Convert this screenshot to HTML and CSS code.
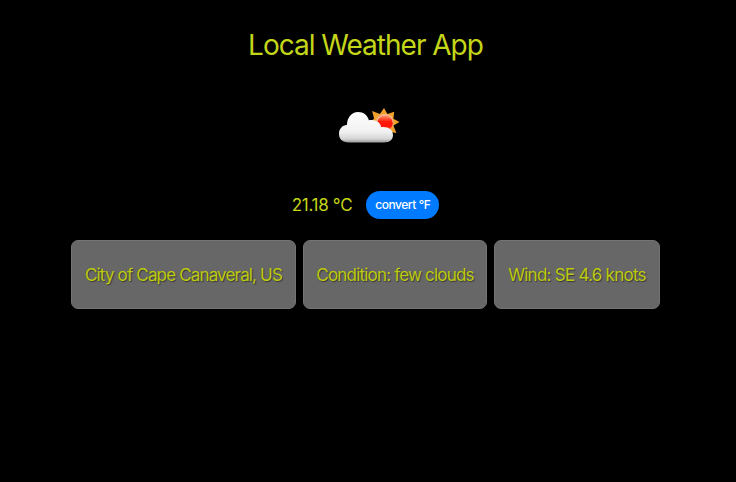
FILE: index.html
```html
<!DOCTYPE html>
<html lang="en">
<head>
<meta charset="utf-8">
<title>Local Weather App</title>
<link rel="stylesheet" href="styles.css">
</head>
<body>
<main class="app">
  <h1 class="title"><span>Local Weather App</span></h1>
  <svg class="icon" width="72" height="48" viewBox="0 0 72 48" aria-hidden="true">
    <defs>
      <linearGradient id="sun" x1="0" y1="0" x2="0" y2="1"><stop offset="0" stop-color="#ff9a70"/><stop offset=".4" stop-color="#ff1a08"/><stop offset=".7" stop-color="#ff1408"/><stop offset="1" stop-color="#ff8a20"/></linearGradient>
      <linearGradient id="cloud" x1="0" y1="0" x2="0" y2="1"><stop offset="0" stop-color="#fff"/><stop offset=".65" stop-color="#f1f1f1"/><stop offset=".88" stop-color="#d5d5d5"/><stop offset="1" stop-color="#999"/></linearGradient>
    </defs>
    <path fill="#f0a12b" d="M50 7l3.400 6 6.800-2.200-.8 7 6.100 3.300-6.100 3.300 3 7.700-8.400-1.500-4 5-4.500-5-6.400 1 1-6.500-4-3.500 4-4-2-7.600 7.800 3z"/>
    <circle cx="50.700" cy="21.700" r="9" fill="#f7b48a"/>
    <circle cx="51" cy="22.200" r="7.800" fill="url(#sun)"/>
    <path fill="url(#cloud)" d="M15 41.500C8 41.500 5 38 5 32.800c0-5 3.200-8.300 8-9 .1-7 4.500-12.800 11-12.800 5.600 0 9.700 3.300 10.900 8.300 5.800-1.500 11.600 1.500 12.300 6.900C54 25.500 59 28.500 59 34c0 4.800-3.500 7.500-9 7.500z"/>
  </svg>
  <div class="temperature">
    <span class="reading">21.18 °C</span>
    <button class="convert" type="button"><span>convert °F</span></button>
  </div>
  <div class="details">
    <div class="card city"><span>City of Cape Canaveral, US</span></div>
    <div class="card condition"><span>Condition: few clouds</span></div>
    <div class="card wind"><span>Wind: SE 4.6 knots</span></div>
  </div>
</main>
</body>
</html>
```
FILE: styles.css
```css
* { box-sizing: border-box; }
body {
  margin: 0;
  background: #000;
  color: #c4d618;
  font-family: Inter, "Liberation Sans", sans-serif;
}
.app {
  display: flex;
  flex-direction: column;
  align-items: center;
  height: 482px;
  padding: 28px 5px 0 0;
  overflow: hidden;
}
.title {
  margin: 0;
  font-size: 28px;
  font-weight: 430;
  line-height: 34px;
  letter-spacing: -1px;
  white-space: nowrap;
}
.icon {
  display: block;
  margin: 39px 0 0 9px;
}
.temperature {
  display: flex;
  align-items: center;
  gap: 14px;
  margin-top: 42px;
}
.reading {
  font-size: 17px;
  letter-spacing: -0.3px;
  white-space: nowrap;
}
.convert {
  width: 73px;
  height: 28px;
  padding: 0;
  border: 0;
  border-radius: 14px;
  background: #007bff;
  color: #fff;
  font: 550 12px/28px Inter, sans-serif;
  letter-spacing: -0.45px;
  white-space: nowrap;
}
.convert span {
  display: block;
  height: 28px;
}
.details {
  display: flex;
  gap: 7px;
  margin-top: 21px;
}
.card {
  display: flex;
  align-items: center;
  justify-content: center;
  height: 69px;
  border: 1px solid #747474;
  border-radius: 7px;
  background: #676767;
  color: #bccb0c;
  font-size: 17px;
  letter-spacing: -0.84px;
  text-shadow: 1px 1px 1px rgba(0, 0, 0, .45);
  white-space: nowrap;
}
.city { width: 225px; }
.condition {
  width: 184px;
  letter-spacing: -0.81px;
}
.wind {
  width: 166px;
  letter-spacing: -0.75px;
}
```
